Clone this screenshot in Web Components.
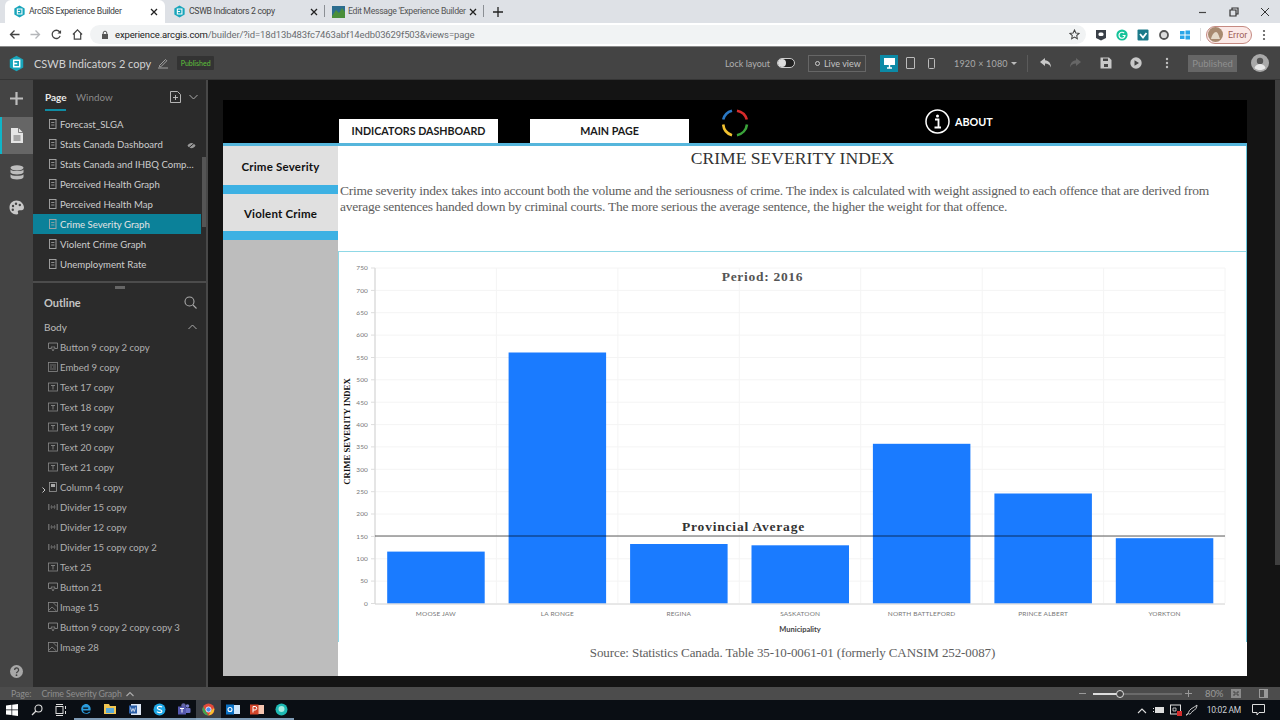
<!DOCTYPE html>
<html lang="en"><head><meta charset="utf-8"><title>CSWB Indicators</title>
<style>
html,body{margin:0;padding:0;width:1280px;height:720px;overflow:hidden;background:#141414;font-family:"Lato","Liberation Sans",sans-serif}
</style></head><body>
<builder-app>
  <browser-tabs></browser-tabs>
  <browser-toolbar></browser-toolbar>
  <app-header></app-header>
  <builder-main>
    <side-rail></side-rail>
    <side-panel>
      <tree-row slot="pages" icon="page">Forecast_SLGA</tree-row>
      <tree-row slot="pages" icon="page" eye>Stats Canada Dashboard</tree-row>
      <tree-row slot="pages" icon="page">Stats Canada and IHBQ Comp…</tree-row>
      <tree-row slot="pages" icon="page">Perceived Health Graph</tree-row>
      <tree-row slot="pages" icon="page">Perceived Health Map</tree-row>
      <tree-row slot="pages" icon="page" selected>Crime Severity Graph</tree-row>
      <tree-row slot="pages" icon="page">Violent Crime Graph</tree-row>
      <tree-row slot="pages" icon="page">Unemployment Rate</tree-row>
      <tree-row slot="outline" icon="button">Button 9 copy 2 copy</tree-row>
      <tree-row slot="outline" icon="embed">Embed 9 copy</tree-row>
      <tree-row slot="outline" icon="text">Text 17 copy</tree-row>
      <tree-row slot="outline" icon="text">Text 18 copy</tree-row>
      <tree-row slot="outline" icon="text">Text 19 copy</tree-row>
      <tree-row slot="outline" icon="text">Text 20 copy</tree-row>
      <tree-row slot="outline" icon="text">Text 21 copy</tree-row>
      <tree-row slot="outline" icon="column" caret>Column 4 copy</tree-row>
      <tree-row slot="outline" icon="divider">Divider 15 copy</tree-row>
      <tree-row slot="outline" icon="divider">Divider 12 copy</tree-row>
      <tree-row slot="outline" icon="divider">Divider 15 copy copy 2</tree-row>
      <tree-row slot="outline" icon="text">Text 25</tree-row>
      <tree-row slot="outline" icon="button">Button 21</tree-row>
      <tree-row slot="outline" icon="image">Image 15</tree-row>
      <tree-row slot="outline" icon="button">Button 9 copy 2 copy copy 3</tree-row>
      <tree-row slot="outline" icon="image">Image 28</tree-row>
    </side-panel>
    <canvas-area>
      <dash-page>
        <dash-header></dash-header>
        <dash-side>
          <dash-tile>Crime Severity</dash-tile>
          <dash-tile>Violent Crime</dash-tile>
        </dash-side>
        <dash-content>
          <severity-chart></severity-chart>
        </dash-content>
      </dash-page>
    </canvas-area>
  </builder-main>
  <status-bar></status-bar>
  <task-bar></task-bar>
</builder-app>
<script>
function def(name, html, init){
  customElements.define(name, class extends HTMLElement{
    constructor(){super();this.attachShadow({mode:"open"}).innerHTML=typeof html==="function"?html(this):html;}
    connectedCallback(){if(init)init(this);}
  });
}
const svg=(w,h,vb,body,extra="")=>`<svg width="${w}" height="${h}" viewBox="${vb}" fill="none" ${extra}>${body}</svg>`;
const hexLogo=(s)=>svg(s,s,"0 0 24 24",`<path d="M12 1l9.5 5.5v11L12 23l-9.5-5.5v-11z" fill="#18a5bb"/><path d="M8 7.5h8.5v9H8zM8 12h5" stroke="#fff" stroke-width="2"/>`);
const closeX=svg(8,8,"0 0 8 8",'<path d="M1 1l6 6M7 1L1 7" stroke="#222" stroke-width="1.3"/>');

def("builder-app",`<style>:host{display:flex;flex-direction:column;width:1280px;height:720px;overflow:hidden}</style><slot></slot>`);

def("browser-tabs",`<style>
:host{display:flex;height:23px;background:#dee1e6;font:8.7px/23px "Roboto",sans-serif;letter-spacing:-.3px;color:#444;padding-left:5px;box-sizing:border-box;align-items:stretch;flex:none}
.t{display:flex;align-items:center;width:160px;box-sizing:border-box;padding:0 7px 0 8px;gap:3px;position:relative}
.t span{flex:1;white-space:nowrap}
.a{background:#fff;border-radius:6px 6px 0 0;color:#3c4043}
.s::after{content:"";position:absolute;right:0;top:5px;bottom:6px;width:1px;background:#8b8f94}
.plus{margin-left:9px;display:flex;align-items:center}
.win{margin-left:auto;display:flex;align-items:center;gap:17px;padding-right:7px}
</style>
<div class="t a">${hexLogo(13)}<span>ArcGIS Experience Builder</span>${closeX}</div>
<div class="t s">${hexLogo(13)}<span>CSWB Indicators 2 copy</span>${closeX}</div>
<div class="t s" style="width:159px;padding-left:7px">${svg(13,13,"0 0 13 13",'<rect width="13" height="12" y="1" fill="#2c6d8f"/><path d="M0 11l4-6 3 3 3-5 3 4v6H0z" fill="#4b8f3a"/>')}<span style="color:#555">Edit Message 'Experience Builder</span>${closeX}</div>
<div class="plus">${svg(10,10,"0 0 10 10",'<path d="M5 0v10M0 5h10" stroke="#222" stroke-width="1.3"/>')}</div>
<div class="win">
${svg(13,10,"0 0 13 10",'<path d="M3 5.5h7" stroke="#444" stroke-width="1.2"/>')}
${svg(14,10,"0 0 14 10",'<path d="M4 3h6v6H4zM6 3V1h6v6h-2" stroke="#333" stroke-width="1.2"/>')}
${svg(16,10,"0 0 10 10",'<path d="M1 1l8 8M9 1L1 9" stroke="#333" stroke-width="1"/>')}
</div>`);

def("browser-toolbar",`<style>
:host{display:flex;align-items:center;height:24px;background:#fff;flex:none;box-sizing:border-box;border-bottom:1px solid #8a8a8a;font:9.5px "Roboto",sans-serif;padding-left:9px}
.n{display:flex;gap:10px;align-items:center}
.o{display:flex;align-items:center;margin-left:7px;width:996px;height:19px;background:#f1f3f4;border-radius:10px;padding:0 6px 0 11px;box-sizing:border-box;gap:6px;color:#6a6d70;letter-spacing:-.13px}
.o b{font-weight:400;color:#222}
.o i{flex:1}
.e{display:flex;align-items:center;gap:9px;margin-left:9px}
.pill{display:flex;align-items:center;gap:5px;width:46px;height:18px;box-sizing:border-box;border:1px solid #c58a82;border-radius:9px;background:#fbe9e7;color:#9c5b55;font-size:9px;padding-left:1px;margin-left:-4px}
.dv{width:1px;height:13px;background:#ddd}
.k{margin-left:1px;display:flex}
</style>
<div class="n">
${svg(11,11,"0 0 11 11",'<path d="M10.5 5.5H1.5M5.5 1.5l-4 4 4 4" stroke="#444" stroke-width="1.3"/>')}
${svg(11,11,"0 0 11 11",'<path d="M.5 5.5h9M5.5 1.5l4 4-4 4" stroke="#b5b7ba" stroke-width="1.3"/>')}
${svg(11,11,"0 0 12 12",'<path d="M10 7.5A4.5 4.5 0 1 1 9.3 3L10.5 4.5" stroke="#444" stroke-width="1.4"/><path d="M11 1v4H7z" fill="#444"/>')}
${svg(11,11,"0 0 12 12",'<path d="M1 6l5-5 5 5M2.5 5v6h7V5" stroke="#444" stroke-width="1.3"/>')}
</div>
<div class="o">${svg(8,10,"0 0 8 10",'<rect x="1" y="4" width="6" height="5" fill="#555"/><path d="M2.2 4V3a1.8 1.8 0 0 1 3.6 0v1" stroke="#555"/>')}<span><b>experience.arcgis.com</b>/builder/?id=18d13b483fc7463abf14edb03629f503&amp;views=page</span><i></i>${svg(11,11,"0 0 12 12",'<path d="M6 1l1.5 3.3 3.5.4-2.6 2.4.7 3.5L6 8.9l-3.1 1.7.7-3.5L1 4.7l3.5-.4z" stroke="#444" stroke-width="1.1"/>')}</div>
<div class="e">
${svg(12,12,"0 0 12 12",'<path d="M1 1h10v8l-5 2.5L1 9z" fill="#3a4048"/><rect x="3.5" y="3.5" width="5" height="3.5" rx="1.5" fill="#fff"/>')}
${svg(12,12,"0 0 12 12",'<circle cx="6" cy="6" r="5.6" fill="#15c39a"/><path d="M8.2 4.2A3 3 0 1 0 9 6.5H6.6" stroke="#fff" stroke-width="1.2"/>')}
${svg(12,12,"0 0 12 12",'<rect width="11" height="11" y=".5" x=".5" rx="1" fill="#1c7a8a"/><path d="M3 5l3 3.5L9.5 4" stroke="#fff" stroke-width="1.8"/>')}
${svg(12,12,"0 0 12 12",'<circle cx="6" cy="6" r="4" stroke="#555" stroke-width="1.8" fill="#ddd"/>')}
${svg(12,12,"0 0 12 12",'<path d="M1 2h4.5v3.5H1zM6.5 1.5H11v4H6.5zM1 6.5h4.5V10H1zM6.5 6.5H11v4H6.5z" fill="#2aa6e8"/>')}
<span class="dv"></span>
<span class="pill">${svg(15,15,"0 0 15 15",'<circle cx="7.5" cy="7.5" r="7.5" fill="#a88a70"/><path d="M3 12c1-4 3-7 5-7s3 4 4 7z" fill="#e5d9c8"/>')}<span>Error</span></span>
<span class="k">${svg(4,12,"0 0 4 12",'<circle cx="2" cy="2" r="1.1" fill="#555"/><circle cx="2" cy="6" r="1.1" fill="#555"/><circle cx="2" cy="10" r="1.1" fill="#555"/>')}</span>
</div>`);

def("app-header",`<style>
:host{display:flex;align-items:center;height:33px;background:#444;flex:none;color:#cfcfcf;font:11px "Lato",sans-serif;padding-left:8px;box-sizing:border-box;border-bottom:1px solid #353535}
.title{margin-left:9px;color:#d2d2d2;white-space:nowrap}
.badge{margin-left:8px;background:#333;color:#5fc13c;font-size:7px;padding:3px 0;width:37px;text-align:center;box-sizing:border-box;border-radius:1px}
.sp{flex:1}
.r{display:flex;align-items:center;font-size:9px;color:#b0b0b0}
.tg{width:18px;height:10px;border:1px solid #ccc;border-radius:6px;margin-left:7px;box-sizing:border-box;background:#222;position:relative}
.tg::before{content:"";position:absolute;left:0;top:0;width:8px;height:8px;border-radius:50%;background:#ddd}
.live{display:flex;align-items:center;gap:4px;width:58px;height:17px;border:1px solid #666;box-sizing:border-box;margin-left:13px;padding-left:6px;color:#c5c5c5}
.dot{width:3px;height:3px;border:1px solid #ccc;border-radius:50%}
.dev{width:18px;height:17px;background:#0c8aa6;margin-left:14px;display:flex;align-items:center;justify-content:center}
.size{margin-left:19px;width:57px;color:#aaa;letter-spacing:.2px;white-space:nowrap}
.c{width:0;height:0;border:3px solid transparent;border-top:3.5px solid #bbb;border-bottom:0}
.div{width:1px;height:17px;background:#5b5b5b;margin:0 11px 0 10px}
.pub{width:49px;height:17px;background:#666;color:#8f8f8f;text-align:center;line-height:17px;font-size:9.5px;margin-left:19px}
</style>
${hexLogo(17)}
<span class="title">CSWB Indicators 2 copy</span>
<span style="margin-left:6px;display:flex">${svg(12,12,"0 0 12 12",'<path d="M1 11h10M2.5 8.5L8.5 2.5l1.3 1.3-6 6H2.5z" stroke="#aaa" stroke-width=".9"/>')}</span>
<span class="badge">Published</span>
<span class="sp"></span>
<div class="r">
<span>Lock layout</span><span class="tg"></span>
<span class="live"><span class="dot"></span>Live view</span>
<span class="dev">${svg(13,12,"0 0 13 12",'<path d="M1 1h11v7H1z" fill="#fff"/><path d="M4 11h5M6.5 8v3" stroke="#fff" stroke-width="1.4"/>')}</span>
<span style="margin-left:8px;display:flex">${svg(9,12,"0 0 9 12",'<rect x=".5" y=".5" width="8" height="11" rx=".5" stroke="#bbb"/>')}</span>
<span style="margin-left:13px;display:flex">${svg(7,11,"0 0 7 11",'<rect x=".5" y=".5" width="6" height="10" rx="1" stroke="#bbb"/>')}</span>
<span class="size">1920 × 1080</span><span class="c"></span>
<span class="div"></span>
<span style="display:flex">${svg(13,12,"0 0 13 12",'<path d="M6 1L1 5l5 4V6.6c3 0 4.6 1 6 4 0-4-2-7-6-7.4z" fill="#c8c8c8"/>')}</span>
<span style="margin-left:17px;display:flex">${svg(13,12,"0 0 13 12",'<path d="M7 1l5 4-5 4V6.6c-3 0-4.6 1-6 4 0-4 2-7 6-7.4z" fill="#666"/>')}</span>
<span style="margin-left:18px;display:flex">${svg(12,12,"0 0 12 12",'<path d="M.5.5h8.5l2.5 2.5v8.5H.5z" fill="#c8c8c8"/><rect x="3" y="1.5" width="5" height="2.5" fill="#444"/><rect x="4" y="7" width="4" height="3" fill="#444"/>')}</span>
<span style="margin-left:18px;display:flex">${svg(12,12,"0 0 12 12",'<circle cx="6" cy="6" r="5.7" fill="#c8c8c8"/><path d="M4.5 3.2L9 6l-4.5 2.8z" fill="#444"/>')}</span>
<span style="margin-left:23px;display:flex">${svg(4,12,"0 0 4 12",'<circle cx="2" cy="2" r="1.2" fill="#c0c0c0"/><circle cx="2" cy="6" r="1.2" fill="#c0c0c0"/><circle cx="2" cy="10" r="1.2" fill="#c0c0c0"/>')}</span>
<span class="pub">Published</span>
<span style="margin:0 11px 0 14px;display:flex">${svg(18,18,"0 0 18 18",'<circle cx="9" cy="9" r="9" fill="#a9a9a9"/><circle cx="9" cy="7" r="3.2" fill="#555"/><path d="M3.5 14c1-3 3-4 5.5-4s4.5 1 5.5 4c-1.500 1.500-3.500 2-5.500 2s-4-.5-5.500-2z" fill="#e8e8e8"/>')}</span>
</div>`);

def("builder-main",`<style>:host{display:flex;min-height:0;height:607px;flex:none}</style><slot></slot>`);

def("side-rail",`<style>
:host{display:flex;flex-direction:column;align-items:center;width:33px;background:#444;flex:none;position:relative}
.i{width:100%;display:flex;align-items:center;justify-content:center;box-sizing:border-box}
.a{background:#666;border-left:2px solid #0fb5c8;height:37px;padding-right:2px}
.h{margin-top:auto;margin-bottom:7px}
</style>
<div class="i" style="height:37px">${svg(15,15,"0 0 15 15",'<path d="M7.500 1v13M1 7.500h13" stroke="#bdbdbd" stroke-width="2.200"/>')}</div>
<div class="i a">${svg(12,15,"0 0 12 15",'<path d="M0 0h7.500L12 4.500V15H0z" fill="#e5e5e5"/><path d="M7.500 0v4.500H12" stroke="#666" stroke-width=".8"/><path d="M2.500 8h7M2.500 10h7M2.500 12h7" stroke="#666" stroke-width="1"/>')}</div>
<div class="i" style="height:18px;margin-top:9px">${svg(14,15,"0 0 14 15",'<ellipse cx="7" cy="2.800" rx="6.500" ry="2.600" fill="#bdbdbd"/><path d="M.5 4.600c1 2 12 2 13 0v3c-1 2.500-12 2.500-13 0zM.5 9.200c1 2.200 12 2.200 13 0v3c-1 3-12 3-13 0z" fill="#bdbdbd"/>')}</div>
<div class="i" style="height:18px;margin-top:17px">${svg(15,15,"0 0 15 15",'<path d="M7.500.5C3.500.5.500 3.500.500 7.500s3 7 7 7c1.500 0 2-1 1.500-2-.6-1.200 0-2.200 1.500-2.200h2c1.500 0 2.500-1 2.500-3C14.500 3.300 11.500.5 7.500.5z" fill="#c8c8c8"/><circle cx="4" cy="6" r="1.200" fill="#444"/><circle cx="7" cy="3.700" r="1.200" fill="#444"/><circle cx="10.800" cy="5" r="1.200" fill="#444"/><circle cx="3.800" cy="9.700" r="1.200" fill="#444"/>')}</div>
<div class="i h" style="height:18px">${svg(13,13,"0 0 13 13",'<circle cx="6.500" cy="6.500" r="6.500" fill="#a8a8a8"/><path d="M4.600 5a2 2 0 1 1 3 1.700c-.8.500-1.100.900-1.100 1.600" stroke="#444" stroke-width="1.300"/><circle cx="6.500" cy="10.200" r=".9" fill="#444"/>')}</div>`);

def("side-panel",`<style>
:host{display:flex;flex-direction:column;width:173px;background:#2b2b2b;flex:none;color:#c8c8c8;font:10px "Lato",sans-serif;position:relative}
.tabs{display:flex;align-items:flex-start;height:34px;padding:11px 0 0 12px;box-sizing:border-box;gap:10px;color:#8a8a8a}
.tabs b{color:#e8e8e8;font-weight:700;border-bottom:2px solid #0f8ca3;height:20px;box-sizing:border-box;width:21px;white-space:nowrap;font-size:10px}
.tabs i{flex:1}
.pages{height:167px;display:flex;flex-direction:column;position:relative;padding-right:5px}
.thumb{position:absolute;right:0;top:43px;width:4px;height:70px;background:#555}
.split{height:2px;background:#4c4c4c;flex:none}
.grip{width:10px;height:3px;background:#666;margin:3px auto 0}
.oh{display:flex;justify-content:space-between;align-items:center;font-size:11px;font-weight:700;color:#c4c4c4;padding:3px 9px 0 11px;height:21px}
.body{display:flex;justify-content:space-between;align-items:center;padding:0 9px 0 11px;height:20px;margin-top:4px;font-size:10px;color:#bbb}
</style>
<div class="tabs"><b>Page</b><span style="font-size:9.800px">Window</span><i></i>
${svg(11,12,"0 0 11 12",'<path d="M.5.500h7l3 3v8H.500zM5.500 4v5M3 6.500h5" stroke="#c4c4c4" stroke-width=".9"/>')}
<span style="margin:3px 8px 0 -2px;display:flex">${svg(9,6,"0 0 9 6",'<path d="M.5 1l4 4 4-4" stroke="#aaa"/>')}</span></div>
<div class="pages"><slot name="pages"></slot><div class="thumb"></div></div>
<div class="split"></div><div class="grip"></div>
<div class="oh"><span>Outline</span>${svg(13,13,"0 0 13 13",'<circle cx="5.500" cy="5.500" r="4.500" stroke="#aaa" stroke-width="1.100"/><path d="M9 9l3.500 3.500" stroke="#aaa" stroke-width="1.100"/>')}</div>
<div class="body"><span>Body</span>${svg(9,6,"0 0 9 6",'<path d="M.5 5l4-4 4 4" stroke="#aaa"/>')}</div>
<slot name="outline"></slot>`);

const rowIcons={
 page:'<rect x="1.500" y=".5" width="6.500" height="9" stroke="#a8a8a8" stroke-width=".9"/><path d="M3.200 3.500h3.200M3.200 6h3.200" stroke="#a8a8a8" stroke-width=".8"/>',
 button:'<path d="M.5 1h9v5.500H7" stroke="#888" stroke-width=".9"/><path d="M.5 1v5.500H3" stroke="#888" stroke-width=".9"/><path d="M3 5h4L5 9z" stroke="#888" stroke-width=".8"/>',
 embed:'<rect x=".5" y=".5" width="9" height="9" stroke="#888" stroke-width=".8"/><path d="M2 3h6M2 5h2M5 5h3M2 7h6" stroke="#777" stroke-width=".9"/>',
 text:'<rect x=".5" y="1" width="9" height="8" stroke="#888" stroke-width=".8"/><path d="M3 3.500h4M5 3.500v4" stroke="#888" stroke-width=".9"/>',
 column:'<rect x="1.500" y=".5" width="7" height="9" stroke="#999" stroke-width=".8"/><rect x="3" y="2" width="4" height="3" fill="#aaa"/>',
 divider:'<path d="M.8 2v6M9.200 2v6M2.500 5h5" stroke="#777" stroke-width="1.200"/><path d="M3.500 3v4M6.500 3v4" stroke="#666" stroke-width=".8"/>',
 image:'<rect x=".5" y=".5" width="9" height="9" stroke="#888" stroke-width=".8"/><path d="M1 8l3-3 4.500 4M5.500 1l3.500 3.500" stroke="#888" stroke-width=".8"/>'
};
def("tree-row",(h)=>{
 const sel=h.hasAttribute("selected"),pg=h.getAttribute("icon")==="page";
 return `<style>
:host{display:flex;align-items:center;height:20px;flex:none;box-sizing:border-box;padding-left:15px;gap:2px;font:9.600px "Lato",sans-serif;color:${pg?"#cdcdcd":"#b0b0b0"};${sel?"background:#0b8199;color:#e4e4e4;":""}white-space:nowrap;position:relative}
.ic{display:flex;width:10px}
.car{position:absolute;left:9px;top:7px}
.eye{position:absolute;right:5px;top:6px}
</style>
${h.hasAttribute("caret")?`<span class="car">${svg(4,6,"0 0 4 6",'<path d="M.5.5L3 3 .5 5.500" stroke="#ccc"/>')}</span>`:""}
<span class="ic">${svg(10,10,"0 0 10 10",rowIcons[h.getAttribute("icon")])}</span><slot></slot>
${h.hasAttribute("eye")?`<span class="eye">${svg(9,7,"0 0 9 7",'<path d="M.5 3.500C2.500 0 6.500 0 8.500 3.500 6.500 7 2.500 7 .5 3.500z" fill="#999"/><path d="M1 6.500L8 .5" stroke="#2b2b2b"/>')}</span>`:""}`;
});

def("canvas-area",`<style>
:host{display:block;flex:1;min-width:0;background:#141414;border-left:2px solid #484848;padding:20px 0 0 15px;box-sizing:border-box;position:relative}
.sb{position:absolute;right:0;top:0;width:5px;height:485px;background:#3f3f3f}
</style><slot></slot><div class="sb"></div>`);

def("dash-page",`<style>
:host{display:grid;grid-template-columns:115px 909px;grid-template-rows:46px 530px;width:1024px;height:576px}
::slotted(dash-header){grid-column:1 / 3}
</style><slot></slot>`);

def("dash-header",`<style>
:host{display:flex;align-items:flex-end;background:#000;box-sizing:border-box;border-bottom:3px solid #56b6dc;height:46px;padding-left:116px;position:relative;font:700 10.700px "Lato",sans-serif}
.b{width:159px;height:24px;background:#fff;color:#1a1a1a;text-align:center;line-height:24px;white-space:nowrap}
.m{margin-left:32px}
.logo{align-self:flex-start;margin:8px 0 0 31px;display:flex}
.info{align-self:flex-start;display:flex;align-items:center;gap:5px;margin:9px 0 0 175px;color:#fff;font-size:10.800px}
</style>
<div class="b">INDICATORS DASHBOARD</div><div class="b m">MAIN PAGE</div>
<div class="logo">${svg(30,30,"0 0 30 30",`<g stroke-width="2.600"><path d="M3.200 11.500A12.500 12.500 0 0 1 12 2.800" stroke="#2a78c4"/><path d="M17 2.700A12.500 12.500 0 0 1 26.800 11.500" stroke="#d62b2b"/><path d="M3.200 16.500A12.500 12.500 0 0 0 12 27.200" stroke="#f2c230"/><path d="M27 16.500A12.500 12.500 0 0 1 17 27.200" stroke="#3aa33a"/></g>`)}</div>
<div class="info">${svg(25,25,"0 0 25 25",'<circle cx="12.500" cy="12.500" r="11.500" stroke="#fff" stroke-width="1.500"/><circle cx="12.500" cy="7" r="1.500" fill="#fff"/><path d="M10 10.500h3.500v8M9.500 18.500h6.500" stroke="#fff" stroke-width="1.800"/>')}<span>ABOUT</span></div>`);

def("dash-side",`<style>:host{display:flex;flex-direction:column;background:#bdbdbd}</style><slot></slot>`);
def("dash-tile",`<style>:host{display:block;background:#e0e0e0;height:39px;text-align:center;font:700 11.500px/41px "Lato",sans-serif;color:#111;border-bottom:9px solid #3db1e3;letter-spacing:.2px}
:host(:nth-child(2)){height:37px;line-height:39px}</style><slot></slot>`);

def("dash-content",`<style>
:host{display:flex;flex-direction:column;background:#fff;font-family:"Liberation Serif",serif;color:#5e5e5e}
h1,p,.gap{border-right:1px solid #6cc8dc}
h1{margin:0;height:25px;font:400 17.600px/24px "Liberation Serif",serif;color:#333;text-align:center;padding-left:1px;box-sizing:border-box}
p{margin:0;padding:12px 0 0 2px;height:67px;box-sizing:border-box;font-size:13.500px;line-height:16px;letter-spacing:-.26px;white-space:nowrap;flex:none}
.gap{height:13px;flex:none}
.src{text-align:center;font-size:13px;line-height:20px;padding-top:1px;letter-spacing:-.1px}
</style>
<h1>CRIME SEVERITY INDEX</h1>
<p>Crime severity index takes into account both the volume and the seriousness of crime. The index is calculated with weight assigned to each offence that are derived from<br>average sentences handed down by criminal courts. The more serious the average sentence, the higher the weight for that offence.</p>
<div class="gap"></div>
<slot></slot>
<div class="src">Source: Statistics Canada. Table 35-10-0061-01 (formerly CANSIM 252-0087)</div>`);

(function(){
 const y0=603.5,k=335.5/750,X=v=>375+121.43*v;
 let g="";
 for(let v=0;v<=750;v+=50){const y=(y0-v*k).toFixed(1);
  if(v)g+=`<path d="M375 ${y}H1225" stroke="#f4f4f4"/>`;
  g+=`<path d="M371 ${y}H375" stroke="#ddd"/><text x="368" y="${(+y+2.300).toFixed(1)}" text-anchor="end" class="t">${v}</text>`;}
 for(let i=1;i<=7;i++)g+=`<path d="M${X(i).toFixed(1)} 268V603" stroke="#f4f4f4"/>`;
 const data=[["MOOSE JAW",116],["LA RONGE",561],["REGINA",133],["SASKATOON",130],["NORTH BATTLEFORD",357],["PRINCE ALBERT",246],["YORKTON",146]];
 data.forEach((d,i)=>{const x=X(i)+12.200,y=y0-d[1]*k;
  g+=`<rect x="${x.toFixed(1)}" y="${y.toFixed(1)}" width="97.500" height="${(y0-y).toFixed(1)}" fill="#1a7bff"/>`;
  g+=`<text x="${(x+48.700).toFixed(1)}" y="615.500" text-anchor="middle" class="t">${d[0]}</text>`;});
 def("severity-chart",`<style>
:host{display:block;height:391px;flex:none;box-sizing:border-box}
svg{display:block}
.t{font:6.500px "Lato",sans-serif;fill:#777;letter-spacing:.15px}
.s{font-family:"Liberation Serif",serif;font-weight:700}
</style>
<svg width="909" height="391" viewBox="338 251 909 391" fill="none">
<path d="M338 251.500H1247" stroke="#8fd8e6"/><path d="M338.500 251V642" stroke="#8fd8e6"/><path d="M1246.500 251V642" stroke="#6cc8dc"/>
${g}
<path d="M375 268V604" stroke="#dcdcdc" stroke-width="1.500"/><path d="M375 604H1225" stroke="#d0d0d0"/>
<path d="M375 536H1225" stroke="#000" stroke-opacity=".42" stroke-width="1.500"/>
<text x="762.500" y="281" text-anchor="middle" class="s" font-size="13.500" fill="#555" letter-spacing=".7">Period: 2016</text>
<text x="743.500" y="530.500" text-anchor="middle" class="s" font-size="13.500" fill="#333" letter-spacing=".8">Provincial Average</text>
<text x="800" y="632" text-anchor="middle" style="font:700 7.500px Lato,sans-serif" fill="#444">Municipality</text>
<text transform="translate(350 431.500) rotate(-90)" text-anchor="middle" class="s" font-size="8.700" fill="#111">CRIME SEVERITY INDEX</text>
</svg>`);
})();

def("status-bar",`<style>
:host{display:flex;align-items:center;height:13px;background:#4c4c4c;flex:none;font:8.800px "Lato",sans-serif;color:#8e8e8e;padding-left:11px;box-sizing:border-box;letter-spacing:-.1px}
.sp{flex:1}.r{display:flex;align-items:center}
.tr{width:89px;height:2px;background:#6a6a6a;margin:0 0 0 6px;position:relative}
.tr::before{content:"";position:absolute;left:0;top:0;width:24px;height:2px;background:#ddd}
.tr::after{content:"";position:absolute;left:23px;top:-3px;width:6px;height:6px;border:1px solid #ddd;border-radius:50%;background:#444}
</style>
<span>Page:</span><span style="margin-left:10px">Crime Severity Graph</span>
<span style="margin-left:4px;display:flex">${svg(8,6,"0 0 8 6",'<path d="M.5 5L4 1.500 7.500 5" stroke="#aaa" stroke-width="1.200"/>')}</span>
<span class="sp"></span>
<div class="r">
${svg(9,9,"0 0 9 9",'<path d="M1 4.500h7" stroke="#999"/>')}
<span class="tr"></span>
<span style="margin-left:2px;display:flex">${svg(9,9,"0 0 9 9",'<path d="M1 4.500h7M4.500 1v7" stroke="#999"/>')}</span>
<span style="margin-left:12px;width:18px;color:#9a9a9a;font-size:9.500px">80%</span>
<span style="margin-left:8px;display:flex">${svg(10,9,"0 0 10 9",'<rect width="10" height="9" fill="#8a8a8a"/><path d="M2 3h2v3H2M8 3H6v3h2" stroke="#444"/>')}</span>
<span style="margin:0 12px 0 18px;display:flex">${svg(9,9,"0 0 9 9",'<rect width="9" height="9" fill="#999"/><rect x="1" y="1" width="4" height="7" fill="#4c4c4c"/>')}</span>
</div>`);

def("task-bar",`<style>
:host{display:flex;align-items:center;height:20px;background:#0a0e14;flex:none;position:relative;font:8.500px "Roboto",sans-serif;letter-spacing:-.25px;color:#cfd2d6}
.c{width:24.500px;height:20px;display:flex;align-items:center;justify-content:center;box-sizing:border-box;flex:none}
.run{border-bottom:2px solid #7f9bb5}
.act{background:#3b3f45;border-bottom:2px solid #88a7c2}
.sp{flex:1}
.tray{display:flex;align-items:center;gap:6px;padding-right:15px}
</style>
<div class="c">${svg(12,12,"0 0 12 12",'<path d="M0 1.500L5.500.8v4.700H0zM6.200.7L12 0v5.500H6.200zM0 6.200h5.500v4.900L0 10.500zM6.200 6.200H12V12l-5.800-.8z" fill="#fff"/>')}</div>
<div class="c">${svg(12,12,"0 0 12 12",'<circle cx="7.500" cy="4.500" r="3.500" stroke="#ddd" stroke-width="1.100"/><path d="M5 7L1 11" stroke="#ddd" stroke-width="1.300"/>')}</div>
<div class="c">${svg(12,12,"0 0 12 12",'<rect x="1" y="2.500" width="7" height="7" stroke="#ddd"/><path d="M1 .5h7M1 11.500h7M10.500 2v3M10.500 7v3" stroke="#ddd"/>')}</div>
<div class="c run">${svg(14,14,"0 0 14 14",'<path d="M11.500 8.500H4c.2 2.500 4 3.300 6 1.200h1.500C9.500 13 3 12.500 2.300 8 1.700 3.500 6 1 9 2.500c2.500 1.200 3 4 2.500 6z" fill="#2a9bdc"/><rect x="4.200" y="5.500" width="5" height="1.300" fill="#0a0e14"/>')}</div>
<div class="c run">${svg(14,12,"0 0 14 12",'<path d="M1 1h5l1 2h6v8H1z" fill="#f1c652"/><rect x="3" y="5" width="8" height="5" fill="#5aa9d8"/>')}</div>
<div class="c run">${svg(14,13,"0 0 14 13",'<rect x="3" y="1" width="10" height="11" fill="#dfe8f5"/><rect x="1" y="2.500" width="8" height="8" fill="#2b5fa8"/><path d="M2.500 4.500l1.200 4 1.300-3 1.300 3 1.200-4" stroke="#fff" stroke-width=".7"/>')}</div>
<div class="c run">${svg(13,13,"0 0 13 13",'<circle cx="6.500" cy="6.500" r="6" fill="#1fa8e6"/><path d="M9 4.200C8 3 4.300 3 4.300 5c0 2 4.600 1.200 4.600 3.200 0 1.800-3.800 1.800-5 .5" stroke="#fff" stroke-width="1.200"/>')}</div>
<div class="c run">${svg(14,13,"0 0 14 13",'<circle cx="10.500" cy="3" r="1.800" fill="#7a7fd0"/><rect x="8" y="5" width="5.500" height="5" rx="1" fill="#6a6fc5"/><circle cx="6.500" cy="2.500" r="2.200" fill="#6264a7"/><rect x="1" y="3.500" width="8" height="8" fill="#5558af"/><path d="M3 5.500h4M5 5.500v4" stroke="#fff"/>')}</div>
<div class="c act">${svg(13,13,"0 0 13 13",'<circle cx="6.500" cy="6.500" r="6" fill="#e04a3a"/><path d="M1.300 3.500L4 9 6.500 12.500A6 6 0 0 1 1.300 3.500z" fill="#3aa753"/><path d="M6.500 12.500L9 8l3-3a6 6 0 0 1-5.500 7.500z" fill="#f6c22f"/><circle cx="6.500" cy="6.500" r="2.600" fill="#4a8df0" stroke="#fff" stroke-width=".8"/>')}</div>
<div class="c run">${svg(14,13,"0 0 14 13",'<rect x="5" y="2" width="9" height="9" fill="#cfe6fa"/><rect y="1.500" width="8" height="10" fill="#0b72c6"/><circle cx="4" cy="6.500" r="2" stroke="#fff" stroke-width="1.100"/>')}</div>
<div class="c run">${svg(14,13,"0 0 14 13",'<rect x="5" y="2" width="9" height="9" fill="#f5c5b0"/><rect y="1.500" width="8.500" height="10" fill="#d2452a"/><path d="M3 9.500v-6h2a1.500 1.500 0 0 1 0 3.500H3" stroke="#fff"/>')}</div>
<div class="c run">${svg(13,13,"0 0 13 13",'<circle cx="6.500" cy="6.500" r="6" fill="#1dbab4"/><circle cx="6.500" cy="6" r="3" fill="#a7ece2"/>')}</div>
<span class="sp"></span>
<div class="tray">
${svg(10,7,"0 0 10 7",'<path d="M1 6l4-4 4 4" stroke="#ddd" stroke-width="1.100"/>')}
${svg(11,8,"0 0 11 8",'<rect x="2" y="1" width="9" height="6" fill="#ddd"/><path d="M0 2h1v1H0zM0 5h1v1H0z" fill="#ddd"/>')}
${svg(12,12,"0 0 12 12",'<rect x=".5" y="1" width="10" height="9" stroke="#ddd"/><path d="M3 4h3v3H3z" stroke="#ddd" stroke-width=".8"/><rect x="7" y="7" width="5" height="5" fill="#d52b2b"/>')}
<span style="margin-left:-3px;display:flex">${svg(13,12,"0 0 13 12",'<path d="M1 11c3-1 2-4 5-6s5-3 6-4c0 3-2 5-4 6s-1 2-3 3c-1 .5-1-1-2 0s-1 1-2 1z" stroke="#ddd" stroke-width=".9"/>')}</span>
<span style="margin-left:3px;white-space:nowrap">10:02 AM</span>
<span style="margin-left:5px;display:flex">${svg(13,12,"0 0 13 12",'<path d="M.5.500h12v8H7L5 11V8.500H.500z" stroke="#ddd"/>')}</span>
</div>`);
</script>
</body></html>
